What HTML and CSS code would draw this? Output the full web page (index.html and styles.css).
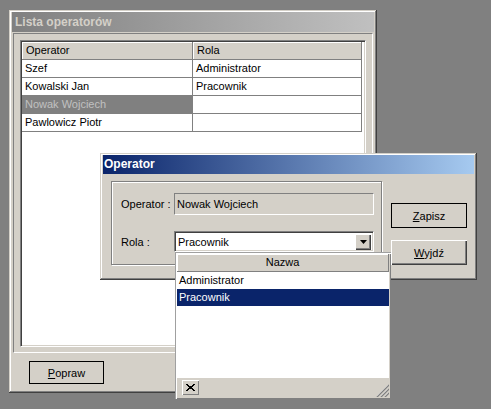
FILE: index.html
```html
<!DOCTYPE html>
<html>
<head>
<meta charset="utf-8">
<link rel="stylesheet" href="styles.css">
</head>
<body>
<div class="desktop">
  <div class="window main-win">
    <div class="titlebar inactive">Lista operatorów</div>
    <div class="main-body">
      <div class="panel">
        <div class="grid">
          <div class="table">
            <div class="hcell">Operator</div><div class="hcell">Rola</div>
            <div class="cell">Szef</div><div class="cell">Administrator</div>
            <div class="cell">Kowalski Jan</div><div class="cell">Pracownik</div>
            <div class="cell sel">Nowak Wojciech</div><div class="cell"></div>
            <div class="cell">Pawlowicz Piotr</div><div class="cell"></div>
          </div>
        </div>
      </div>
      <div class="main-footer">
        <div class="btn default"><span><u>P</u>opraw</span></div>
      </div>
    </div>
  </div>

  <div class="window dialog">
    <div class="titlebar active">Operator</div>
    <div class="dialog-body">
      <div class="group">
        <div class="label">Operator :</div>
        <div class="field">Nowak Wojciech</div>
        <div class="label">Rola :</div>
        <div class="combo">
          <span class="combo-text">Pracownik</span>
          <span class="combo-btn"><svg width="7" height="4" viewBox="0 0 7 4"><path d="M0 0h7L3.5 4z" fill="#000"/></svg></span>
        </div>
      </div>
      <div class="buttons">
        <div class="btn default"><span><u>Z</u>apisz</span></div>
        <div class="btn"><span><u>W</u>yjdź</span></div>
      </div>
    </div>
  </div>

  <div class="dropdown">
    <div class="dd-head">Nazwa</div>
    <div class="dd-list">
      <div class="dd-item">Administrator</div>
      <div class="dd-item selected">Pracownik</div>
    </div>
    <div class="dd-footer">
      <div class="dd-close"><svg width="9" height="7" viewBox="0 0 9 7"><path d="M0 0h2v1h1v1h3V1h1V0h2v1H8v1H7v1H6v1h1v1h1v1h1v1H7V6H6V5H3v1H2v1H0V6h1V5h1V4h1V3H2V2H1V1H0z" fill="#000"/></svg></div>
      <svg class="grip" width="14" height="14" viewBox="0 0 14 14">
        <path d="M13 2L2 13M13 6L6 13M13 10L10 13" stroke="#fff" stroke-width="1"/>
        <path d="M14 2L2 14M14 6L6 14M14 10L10 14" stroke="#808080" stroke-width="1.4"/>
      </svg>
    </div>
  </div>
</div>
</body>
</html>
```
FILE: styles.css
```css
* { box-sizing: border-box; }
html, body { margin: 0; padding: 0; }
body {
  background: #808080;
  font-family: "Liberation Sans", Arial, sans-serif;
  font-size: 11px;
  color: #000;
}
.desktop {
  position: relative;
  width: 491px;
  height: 409px;
  overflow: hidden;
  background: #808080;
}
.window {
  position: absolute;
  background: #d4d0c8;
  padding: 2px 3px 3px 3px;
  box-shadow: inset -1px -1px #404040, inset 1px 1px #d4d0c8, inset -2px -2px #808080, inset 2px 2px #fff;
  display: flex;
  flex-direction: column;
}
.main-win { left: 9px; top: 10px; width: 368px; height: 383px; }
.titlebar {
  font-weight: bold;
  font-size: 12px;
  height: 20px;
  line-height: 20px;
  padding-left: 3px;
  white-space: nowrap;
}
.titlebar.inactive {
  background: linear-gradient(to right, #808080, #c0c0c0);
  color: #d4d0c8;
}
.titlebar.active {
  background: linear-gradient(to right, #0a246a, #a6caf0);
  color: #fff;
  height: 19px;
  line-height: 19px;
  padding-left: 1px;
}
.main-body {
  flex: 1;
  display: flex;
  flex-direction: column;
}
.panel {
  margin: 1px 1px 0 1px;
  height: 320px;
  border: 1px solid;
  border-color: #808080 #fff #fff #808080;
  padding: 6px 6px 5px 6px;
  display: flex;
}
.grid {
  flex: 1;
  background: #fff;
  border: 1px solid;
  border-color: #808080 #fff #fff #808080;
  box-shadow: inset 1px 1px #404040, inset -1px -1px #d4d0c8;
  padding: 1px;
}
.table {
  display: grid;
  grid-template-columns: 171px 169px;
  grid-auto-rows: 18px;
}
.hcell {
  background: #d4d0c8;
  border-right: 1px solid #808080;
  border-bottom: 1px solid #808080;
  box-shadow: inset 1px 1px #fff;
  padding-left: 4px;
  line-height: 17px;
  white-space: nowrap;
}
.cell {
  border-right: 1px solid #808080;
  border-bottom: 1px solid #808080;
  padding-left: 3px;
  line-height: 17px;
  white-space: nowrap;
}
.cell.sel { background: #808080; color: #c0c0c0; }
.main-footer {
  padding: 8px 0 0 17px;
}
.btn {
  width: 75px;
  height: 23px;
  background: #d4d0c8;
  display: flex;
  align-items: center;
  justify-content: center;
  box-shadow: inset 1px 1px #fff, inset -1px -1px #404040, inset -2px -2px #808080;
}
.btn.default {
  border: 1px solid #000;
  box-shadow: none;
}
.btn u { text-decoration: underline; }

.dialog { left: 100px; top: 153px; width: 377px; height: 127px; }
.dialog-body {
  flex: 1;
  display: flex;
  align-items: flex-start;
}
.group {
  margin: 7px 0 0 8px;
  width: 271px;
  height: 84px;
  border: 1px solid #808080;
  box-shadow: inset 1px 1px #fff, 1px 1px #fff;
  display: grid;
  grid-template-columns: 54px 200px;
  grid-template-rows: 22px 21px;
  row-gap: 16px;
  padding: 11px 0 0 8px;
  align-items: center;
}
.label { white-space: nowrap; padding-left: 1px; }
.field {
  height: 22px;
  border: 1px solid;
  border-color: #808080 #fff #fff #808080;
  line-height: 21px;
  padding-left: 2px;
  white-space: nowrap;
}
.combo {
  height: 21px;
  background: #fff;
  border: 1px solid;
  border-color: #808080 #fff #fff #808080;
  box-shadow: inset 1px 1px #404040, inset -1px -1px #d4d0c8;
  display: flex;
  align-items: center;
  padding: 2px;
}
.combo-text { flex: 1; padding-left: 1px; }
.combo-btn {
  width: 16px;
  height: 16px;
  background: #d4d0c8;
  box-shadow: inset 1px 1px #fff, inset -1px -1px #404040, inset -2px -2px #808080;
  display: flex;
  align-items: center;
  justify-content: center;
}
.buttons {
  margin: 29px 0 0 9px;
  display: flex;
  flex-direction: column;
  gap: 12px;
}
.buttons .btn { width: 76px; height: 25px; }

.dropdown {
  position: absolute;
  left: 175px;
  top: 252px;
  width: 216px;
  height: 147px;
  background: #d4d0c8;
  padding: 2px;
  box-shadow: inset 1px 1px #a0a0a0, inset 2px 2px #fff, inset -1px -1px #808080, inset -2px -2px #d4d0c8;
  display: flex;
  flex-direction: column;
}
.dd-head {
  height: 18px;
  line-height: 17px;
  text-align: center;
  background: #d4d0c8;
  border-right: 1px solid #808080;
  border-bottom: 1px solid #808080;
  box-shadow: inset 1px 1px #fff;
}
.dd-list {
  height: 106px;
  background: #fff;
}
.dd-item {
  height: 17px;
  line-height: 17px;
  padding-left: 2px;
  white-space: nowrap;
}
.dd-item.selected { background: #0a246a; color: #fff; }
.dd-footer {
  flex: 1;
  display: flex;
  align-items: flex-start;
  justify-content: space-between;
  padding: 2px 0 0 5px;
}
.dd-close {
  width: 17px;
  height: 15px;
  background: #d4d0c8;
  box-shadow: inset 1px 1px #fff, inset -1px -1px #808080;
  display: flex;
  align-items: center;
  justify-content: center;
}
.grip { margin-top: 3px; }
```
